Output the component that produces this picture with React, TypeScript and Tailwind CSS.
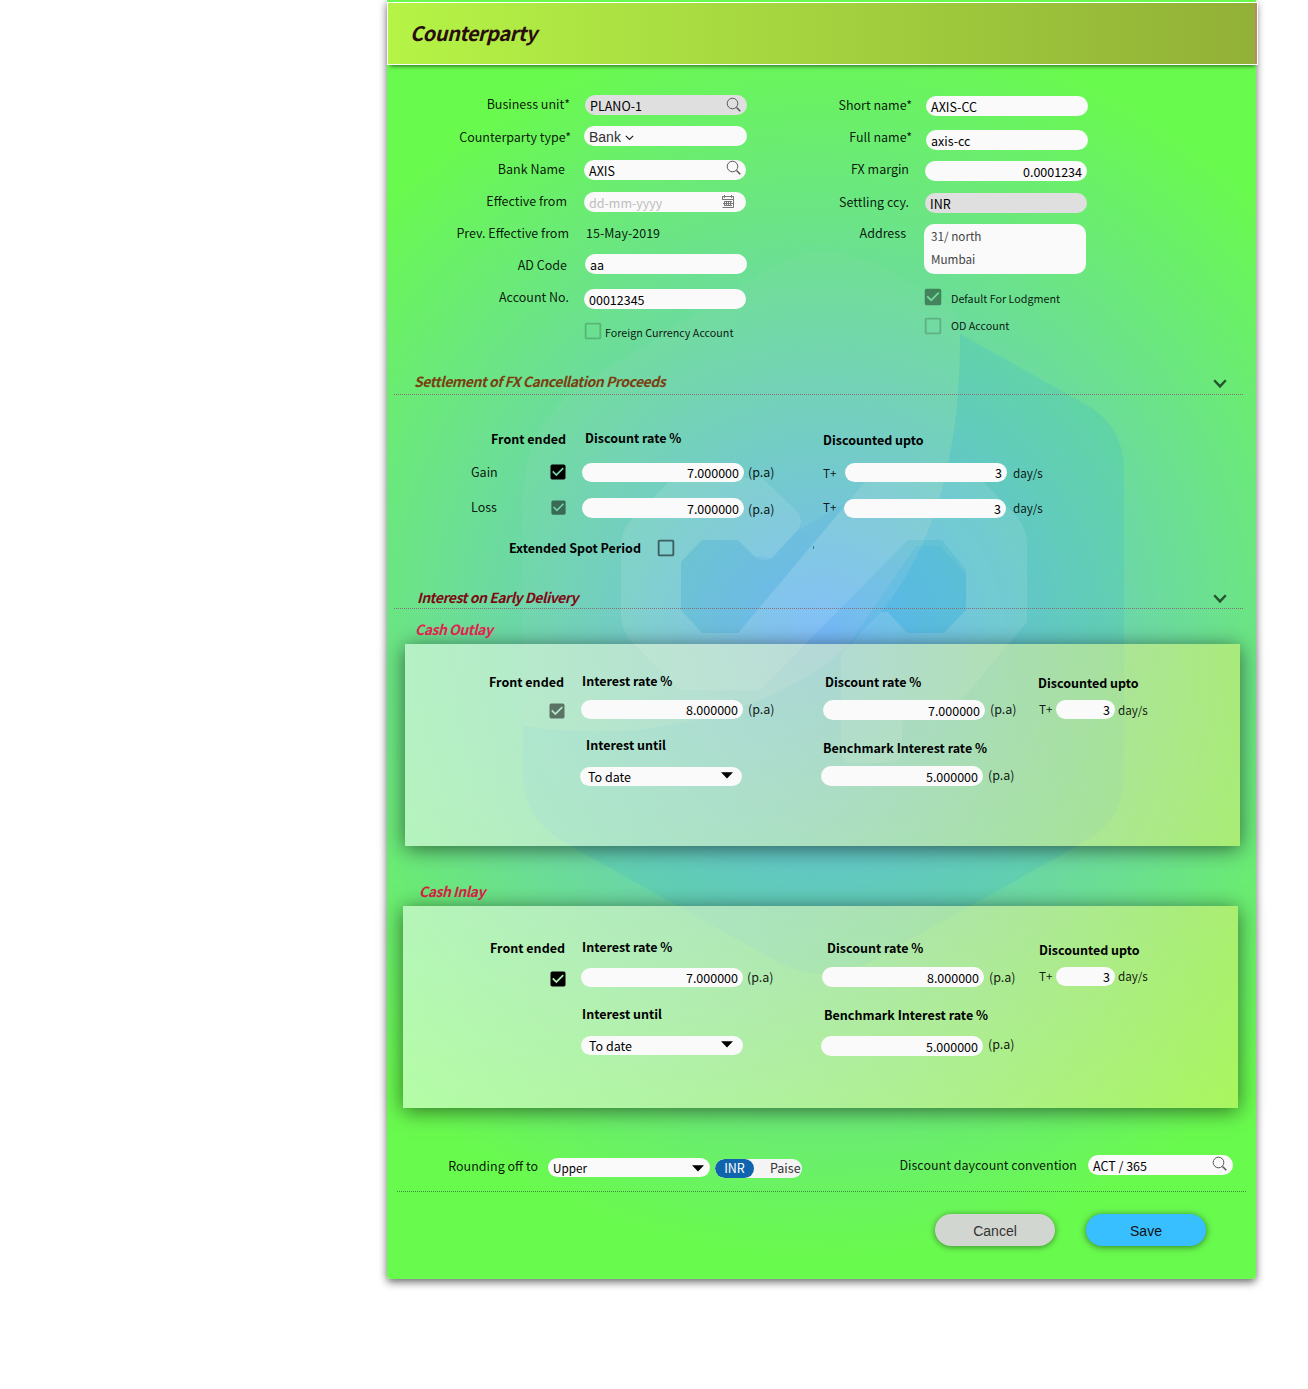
import React from "react";
import { MdCheckBox, MdCheckBoxOutlineBlank } from "react-icons/md";

type Cls = { className?: string };

function Text({ className = "", children }: Cls & { children: React.ReactNode }) {
  return <div className={`shrink-0 whitespace-pre text-[12.5px] leading-5 ${className}`}>{children}</div>;
}

function Bold({ className = "", children }: Cls & { children: React.ReactNode }) {
  return <div className={`shrink-0 whitespace-pre text-[12.5px] font-bold leading-[19px] text-black ${className}`}>{children}</div>;
}

function Field({ className = "", children }: Cls & { children?: React.ReactNode }) {
  return (
    <div className={`flex shrink-0 items-start overflow-hidden whitespace-pre rounded-[10px] px-[5px] text-[12.5px] text-black ${className}`}>
      {children}
    </div>
  );
}

function SearchIcon({ className = "" }: Cls) {
  return (
    <svg className={`ml-auto shrink-0 ${className}`} width="16" height="16" viewBox="0 0 16 16" fill="none" stroke="#555" strokeWidth="1">
      <circle cx="6.5" cy="6.5" r="5.3" />
      <path d="M10.5 10.5L14.3 14.3" strokeWidth="1.5" />
    </svg>
  );
}

function CalendarIcon() {
  return (
    <svg className="ml-auto mr-[7px] mt-[3px] shrink-0" width="12" height="13" viewBox="0 0 12 13" fill="none" stroke="#777" strokeWidth="1">
      <path d="M.5 1V4M11.5 1V4M.5 12.5H11.5V4.5M0 1.5H12M0 4.5H12M2.5 0V3M9.5 0V3M2 6.5H10M1 8.5H11M2 10.5H10M2.5 6V11M4.5 6V11M6.5 6V11M8.5 6V11" />
    </svg>
  );
}

function Chevron({ className = "" }: Cls) {
  return (
    <svg className={`-ml-[.5px] shrink-0 ${className}`} width="14" height="10" viewBox="0 0 14 10" fill="none" stroke="#25542f" strokeWidth="2.4">
      <path d="M1.2 1.2L7 7.4L12.8 1.2" />
    </svg>
  );
}

function Caret({ className = "" }: Cls) {
  return (
    <svg className={`ml-auto shrink-0 ${className}`} width="12" height="7" viewBox="0 0 12 7">
      <path d="M0 .2H12L6 6.6Z" fill="#000" />
    </svg>
  );
}

function SectionTitle({ className = "", children }: Cls & { children: React.ReactNode }) {
  return <div className={`whitespace-pre text-[14px] font-bold italic leading-[18px] tracking-[-0.49px] ${className}`}>{children}</div>;
}

function Watermark() {
  return (
    <svg className="absolute left-0 top-0" width="869" height="1279" viewBox="387 0 869 1279">
      <defs>
        <linearGradient id="leaf" x1="0" y1="0" x2="0" y2="1">
          <stop offset="0" stopColor="#b4dcb4" stopOpacity=".06" />
          <stop offset=".35" stopColor="#a4d8c0" stopOpacity=".12" />
          <stop offset="1" stopColor="#a4d8c0" stopOpacity=".08" />
        </linearGradient>
      </defs>
      <path d="M960 334L1092 408Q1124 430 1124 470V775Q1124 818 1088 840L870 962Q824 986 778 962L560 840Q523 815 523 775V725Q560 733 625 731Q960 700 960 340Z" fill="#38b4d8" fillOpacity=".2" />
      <path d="M523 725V500Q523 430 580 385L770 268Q820 240 870 262L935 295Q960 306 960 340Q960 700 625 731Q560 733 523 725Z" fill="url(#leaf)" />
      <path d="M621 545Q621 531 630 522L672 478H762L798 512Q805 522 796 532L772 558Q762 563 754 556L738 540H702L681 562V610L702 633H738L868 478H980L1018 518Q1027 530 1027 545V622L958 704H902V752Q902 762 890 763H852Q841 762 841 752V655L881 612H888L907 633H944L966 610V570L942 540H908L760 690H680L630 640Q621 628 621 615Z" fill="#fff" fillOpacity=".1" />
      <path d="M916 546H940L966 574V610L944 633H907L888 612H881L845 650Z" fill="#30b0e4" fillOpacity=".18" />
      <path d="M681 562L702 540H738L754 556L772 558L796 532L850 500L738 633H702L681 610Z" fill="#48a8e0" fillOpacity=".16" />
    </svg>
  );
}

function CashPanel({
  className, labels, fields, secondLabels, secondFields,
}: {
  className: string; labels: React.ReactNode; fields: React.ReactNode; secondLabels: React.ReactNode; secondFields: React.ReactNode;
}) {
  return (
    <div className={`h-[202px] w-[835px] bg-[linear-gradient(90deg,rgba(255,255,255,.5),rgba(231,241,112,.5))] shadow-[0_3px_20px_rgba(0,0,0,.55)] ${className}`}>
      {labels}
      {fields}
      {secondLabels}
      {secondFields}
    </div>
  );
}

export default function App() {
  return (
    <div className="h-[1389px] w-[1308px] overflow-hidden bg-white font-['Noto_Sans_CJK_SC',sans-serif] text-black/90">
      <main className="relative ml-[387px] h-[1279px] w-[869px] rounded-b-[4px] bg-[radial-gradient(circle,#70b5ff,#69fa4e_80%)] shadow-[0_3px_8px_rgba(0,0,0,.6)]">
        <Watermark />
        <div className="relative pt-[2px]">
          <header className="h-[63px] w-[871px] border border-white bg-[linear-gradient(90deg,transparent_867px,#bb8768_867px),linear-gradient(90deg,#b5f446,#92b037)] shadow-[0_4px_4px_-3px_rgba(0,0,0,.6)]">
            <h1 className="pl-[22px] pt-[14px] text-[20px] font-bold italic leading-8 tracking-[-0.5px] text-[#2a0d0d]">Counterparty</h1>
          </header>

          <section className="flex h-[307px] pt-[29px]">
            <div className="w-[413px]">
              <div className="flex h-[33px]">
                <Text className="w-[198px] pr-[15px] text-right">Business unit*</Text>
                <Field className="mt-px h-5 w-[162px] bg-[#dfdfdf] leading-[22px]">PLANO-1<SearchIcon className="mt-[2px]" /></Field>
              </div>
              <div className="flex h-8">
                <Text className="w-[197px] pr-[13px] text-right">Counterparty type*</Text>
                <Field className="-mt-px h-5 w-[163px] bg-[#fafafa] font-['Liberation_Sans',sans-serif] !text-[14px] leading-[22px] !text-[#333]">
                  Bank
                  <svg className="ml-1 mt-[9px]" width="9" height="6" viewBox="0 0 9 6" fill="none" stroke="#222" strokeWidth="1.2"><path d="M.8 .8L4.5 4.5L8.2 .8" /></svg>
                </Field>
              </div>
              <div className="flex h-8">
                <Text className="w-[197px] pr-[19px] text-right">Bank Name</Text>
                <Field className="mt-px h-5 w-[162px] bg-[#fafafa] leading-[22px]">AXIS<SearchIcon className="-mr-px" /></Field>
              </div>
              <div className="flex h-8">
                <Text className="w-[197px] pr-[17px] text-right">Effective from</Text>
                <Field className="mt-px h-5 w-[162px] bg-[#fafafa] leading-[22px] !text-[#bdbdbd]">dd-mm-yyyy<CalendarIcon /></Field>
              </div>
              <div className="flex h-8">
                <Text className="w-[199px] pr-[17px] text-right">Prev. Effective from</Text>
                <Text>15-May-2019</Text>
              </div>
              <div className="flex h-8">
                <Text className="w-[198px] pr-[18px] text-right">AD Code</Text>
                <Field className="-mt-px h-5 w-[162px] bg-[#fafafa] leading-[22px]">aa</Field>
              </div>
              <div className="flex h-8">
                <Text className="w-[197px] pr-[15px] text-right">Account No.</Text>
                <Field className="mt-[2px] h-5 w-[162px] bg-[#fafafa] leading-[22px]">00012345</Field>
              </div>
              <div className="flex">
                <MdCheckBoxOutlineBlank size={22} className="ml-[195px] mt-[1px] shrink-0 opacity-20" />
                <Text className="ml-px mt-[4px] !text-[10.75px]">Foreign Currency Account</Text>
              </div>
            </div>
            <div>
              <div className="flex h-[32px] pt-px">
                <Text className="w-[126px] pr-[14px] text-right">Short name*</Text>
                <Field className="mt-px h-5 w-[162px] bg-[#fafafa] leading-[22px]">AXIS-CC</Field>
              </div>
              <div className="flex h-8 pt-px">
                <Text className="w-[126px] pr-[14px] text-right">Full name*</Text>
                <Field className="mt-[3px] h-5 w-[162px] bg-[#fafafa] leading-[22px]">axis-cc</Field>
              </div>
              <div className="flex h-8 pt-px">
                <Text className="w-[125px] pr-[16px] text-right">FX margin</Text>
                <Field className="mt-[2px] h-5 w-[162px] justify-end bg-[#fafafa] leading-[22px]">0.0001234</Field>
              </div>
              <div className="flex h-8 pt-[2px]">
                <Text className="w-[125px] pr-[16px] text-right">Settling ccy.</Text>
                <Field className="mt-px h-5 w-[162px] bg-[#dfdfdf] leading-[22px]">INR</Field>
              </div>
              <div className="flex h-[62px] pt-px">
                <Text className="w-[124px] pr-[18px] text-right">Address</Text>
                <div className="mt-px h-[50px] w-[162px] whitespace-pre rounded-[10px] bg-[#fafafa] px-[7px] text-[11.7px] leading-[23px] text-[#444]">{"31/ north\nMumbai"}</div>
              </div>
              <div className="flex h-[29px]">
                <MdCheckBox size={22} className="ml-[122px] mt-[2px] shrink-0 opacity-40" color="#000" />
                <Text className="ml-[7px] mt-[5px] !text-[10.75px]">Default For Lodgment</Text>
              </div>
              <div className="flex">
                <MdCheckBoxOutlineBlank size={22} className="ml-[122px] mt-[2px] shrink-0 opacity-20" />
                <Text className="ml-[7px] mt-[3px] !text-[10.75px]">OD Account</Text>
              </div>
            </div>
          </section>

          <section className="h-[214px]">
            <div className="ml-[7px] flex h-[23px] w-[849px] border-b border-dotted border-[#876f78]">
              <SectionTitle className="w-[819px] pl-[20px] text-[#7b3f10]">Settlement of FX Cancellation Proceeds</SectionTitle>
              <Chevron className="mt-[7px]" />
            </div>
            <div className="mt-[33px] flex h-[34px]">
              <Bold className="mt-px w-[179px] text-right">Front ended</Bold>
              <Bold className="ml-[19px] w-[238px]">Discount rate %</Bold>
              <Bold className="mt-[2px]">Discounted upto</Bold>
            </div>
            <div className="flex h-[35px]">
              <Text className="ml-[84px] w-[76.5px]">Gain</Text>
              <MdCheckBox size={20} color="#000" className="shrink-0" />
              <Field className="ml-[14.5px] mt-px h-[19px] w-[162px] justify-end bg-[#fafafa] leading-5">7.000000</Field>
              <Text className="ml-[4px] w-[75px]">(p.a)</Text>
              <Text className="mt-px w-[22px] !text-[11.7px]">T+</Text>
              <Field className="mt-px h-[19px] w-[162px] justify-end bg-[#fafafa] leading-5">3</Field>
              <Text className="ml-[6px] mt-px !text-[11.7px]">day/s</Text>
            </div>
            <div className="flex h-[41px]">
              <Text className="ml-[84px] w-[77.5px]">Loss</Text>
              <MdCheckBox size={19} color="#000" className="mt-[1px] shrink-0 opacity-50" />
              <Field className="ml-[14.5px] mt-px h-5 w-[162px] justify-end bg-[#fafafa] leading-[22px]">7.000000</Field>
              <Text className="ml-[4px] mt-[2px] w-[75px]">(p.a)</Text>
              <Text className="w-[21px] !text-[11.7px]">T+</Text>
              <Field className="mt-[2px] h-[19px] w-[162px] justify-end bg-[#fafafa] leading-5">3</Field>
              <Text className="ml-[7px] mt-px !text-[11.7px]">day/s</Text>
            </div>
            <div className="flex">
              <Bold className="w-[254px] text-right">Extended Spot Period</Bold>
              <MdCheckBoxOutlineBlank size={22} className="ml-[14px] -mt-px shrink-0 opacity-60" />
              <div className="ml-[136px] mt-[8px] h-[3px] w-px bg-[#2f7da0]" />
            </div>
          </section>

          <section>
            <div className="ml-[7px] mt-[2px] flex h-[21px] w-[849px] border-b border-dotted border-[#876f78]">
              <SectionTitle className="w-[819px] pl-[23px] text-[#7d0b16]">Interest on Early Delivery</SectionTitle>
              <Chevron className="mt-[6px]" />
            </div>
            <SectionTitle className="ml-[28px] mt-[11px] h-5 text-[#e0234f]">Cash Outlay</SectionTitle>
          </section>

          <CashPanel
            className="ml-[18px] mt-[4px] pt-[28px]"
            labels={
              <div className="flex h-[27px]">
                <Bold className="w-[159px] text-right">Front ended</Bold>
                <Bold className="-mt-px ml-[18px] w-[243px]">Interest rate %</Bold>
                <Bold className="w-[213px]">Discount rate %</Bold>
                <Bold className="mt-px">Discounted upto</Bold>
              </div>
            }
            fields={
              <div className="flex h-[36px]">
                <MdCheckBox size={20} color="#000" className="ml-[141.5px] mt-[2px] shrink-0 opacity-50" />
                <Field className="ml-[14.5px] mt-px h-[19px] w-[162px] justify-end bg-[#fafafa] leading-5">8.000000</Field>
                <Text className="ml-[5px] w-[75px]">(p.a)</Text>
                <Field className="mt-px h-5 w-[162px] justify-end bg-[#fafafa] leading-[22px]">7.000000</Field>
                <Text className="ml-[5px] w-[49px]">(p.a)</Text>
                <Text className="w-[17px] !text-[11.7px]">T+</Text>
                <Field className="mt-px h-[19px] w-[59px] justify-end bg-[#fafafa] leading-5">3</Field>
                <Text className="ml-[3px] mt-px !text-[11.7px]">day/s</Text>
              </div>
            }
            secondLabels={
              <div className="flex h-[31px]">
                <Bold className="ml-[181px] w-[237px]">Interest until</Bold>
                <Bold className="mt-[3px]">Benchmark Interest rate %</Bold>
              </div>
            }
            secondFields={
              <div className="flex">
                <Field className="ml-[175px] mt-px h-[19px] w-[162px] bg-[#fafafa] !pl-[8px] leading-5">To date<Caret className="mr-[4px] mt-[5px]" /></Field>
                <Field className="ml-[79px] h-5 w-[162px] justify-end bg-[#fafafa] leading-[22px]">5.000000</Field>
                <Text className="ml-[5px] -mt-px">(p.a)</Text>
              </div>
            }
          />

          <SectionTitle className="ml-[32px] mt-[36px] h-5 text-[#d31f45]">Cash Inlay</SectionTitle>

          <CashPanel
            className="ml-[16px] mt-[4px] pt-[32px]"
            labels={
              <div className="flex h-[29px]">
                <Bold className="w-[162px] text-right">Front ended</Bold>
                <Bold className="-mt-px ml-[17px] w-[245px]">Interest rate %</Bold>
                <Bold className="w-[212px]">Discount rate %</Bold>
                <Bold className="mt-[2px]">Discounted upto</Bold>
              </div>
            }
            fields={
              <div className="flex h-[37px]">
                <MdCheckBox size={20} color="#000" className="ml-[144.5px] mt-[2px] shrink-0" />
                <Field className="ml-[13.5px] mt-px h-[19px] w-[162px] justify-end bg-[#fafafa] leading-5">7.000000</Field>
                <Text className="ml-[4px] w-[75px]">(p.a)</Text>
                <Field className="h-5 w-[162px] justify-end bg-[#fafafa] leading-[22px]">8.000000</Field>
                <Text className="ml-[5px] w-[50px]">(p.a)</Text>
                <Text className="-mt-px w-[17px] !text-[11.7px]">T+</Text>
                <Field className="h-[19px] w-[59px] justify-end bg-[#fafafa] leading-5">3</Field>
                <Text className="ml-[3px] -mt-px !text-[11.7px]">day/s</Text>
              </div>
            }
            secondLabels={
              <div className="flex h-[32px]">
                <Bold className="ml-[179px] w-[242px]">Interest until</Bold>
                <Bold className="mt-px">Benchmark Interest rate %</Bold>
              </div>
            }
            secondFields={
              <div className="flex">
                <Field className="ml-[178px] h-[19px] w-[162px] bg-[#fafafa] !pl-[8px] leading-5">To date<Caret className="mr-[5px] mt-[5px]" /></Field>
                <Field className="ml-[78px] h-5 w-[162px] justify-end bg-[#fafafa] leading-[22px]">5.000000</Field>
                <Text className="ml-[5px] -mt-[2px]">(p.a)</Text>
              </div>
            }
          />

          <section className="ml-[10px] mt-[47px] flex h-[37px] w-[849px] border-b border-dotted border-[#3c8f3c]">
            <Text className="mt-px w-[141px] text-right">Rounding off to</Text>
            <Field className="ml-[10px] mt-[3px] h-[19px] w-[162px] bg-[#fafafa] !text-[11.7px] leading-[19px]">Upper<Caret className="mr-px mt-[7px]" /></Field>
            <div className="ml-[5px] mt-[4px] flex h-[19px] w-[87px] overflow-hidden rounded-[10px] bg-[#f4f4f4]">
              <div className="w-[39px] rounded-[10px] bg-[#1064ae] text-center text-[12.5px] leading-[18px] text-white">INR</div>
              <div className="ml-[16px] text-[12.5px] leading-[18px] text-[#333]">Paise</div>
            </div>
            <Text className="w-[275px] text-right">Discount daycount convention</Text>
            <Field className="ml-[11px] h-5 w-[145px] bg-[#fafafa] leading-[22px]">ACT / 365<SearchIcon className="mt-px" /></Field>
          </section>

          <footer className="ml-[548px] mt-[22px] flex gap-[31px] font-['Liberation_Sans',sans-serif] text-[14px]">
            <button className="h-8 w-[120px] rounded-[16px] bg-[#d2d6d0] pt-[2px] text-[#333] shadow-[0_1px_6px_rgba(0,0,0,.45)]">Cancel</button>
            <button className="h-8 w-[120px] rounded-[16px] bg-[#38bfff] pt-[2px] text-[#111] shadow-[0_1px_7px_rgba(0,0,0,.5)]">Save</button>
          </footer>
        </div>
      </main>
    </div>
  );
}
